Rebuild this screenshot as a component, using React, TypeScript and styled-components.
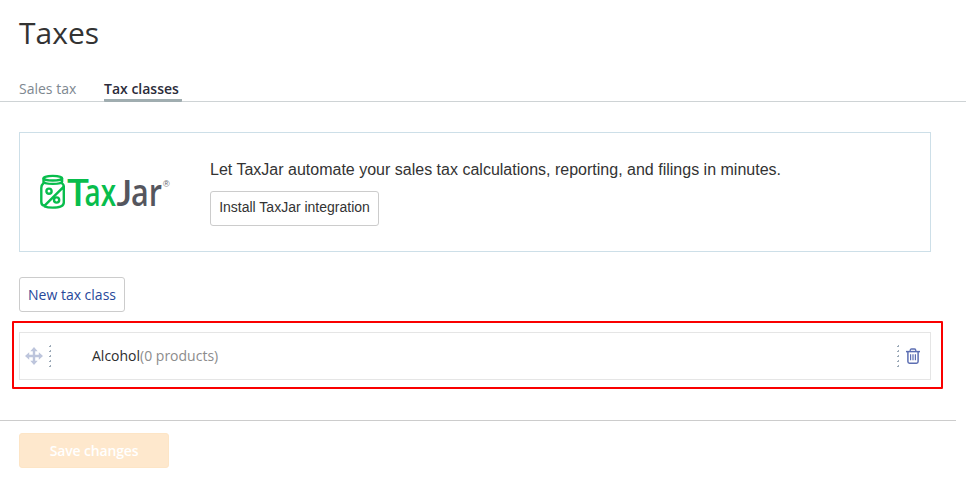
import React from "react";
import styled, { createGlobalStyle } from "styled-components";

const GlobalStyle = createGlobalStyle`
  *, *::before, *::after { box-sizing: border-box; }
  body {
    margin: 0;
    background: #fff;
    color: #313440;
    font-family: "Open Sans", sans-serif;
    font-size: 14px;
  }
  button { font: inherit; cursor: pointer; }
`;

const Page = styled.main`
  display: flex;
  flex-direction: column;
  height: 484px;
  overflow: hidden;
`;

const Title = styled.h1`
  margin: 13px 0 0 19px;
  font-size: 30px;
  line-height: 40px;
  font-weight: 400;
  color: #333;
`;

const Tabs = styled.nav`
  display: flex;
  gap: 27px;
  height: 49px;
  padding-left: 19px;
  align-items: flex-end;
  border-bottom: 1px solid #ced3d5;
`;

const Tab = styled.a<{ $active?: boolean; $width: number }>`
  width: ${(p) => p.$width}px;
  height: 23px;
  margin-bottom: -1px;
  line-height: 20px;
  white-space: nowrap;
  font-size: 14px;
  font-weight: ${(p) => (p.$active ? 600 : 400)};
  color: ${(p) => (p.$active ? "#2c2c3a" : "#7e8890")};
  border-bottom: 3px solid ${(p) => (p.$active ? "#a0adb0" : "transparent")};
  border-radius: 1px;
`;

const Promo = styled.section`
  display: flex;
  height: 120px;
  margin: 30px 35px 0 19px;
  border: 1px solid #cddfe8;
`;

const LogoSlot = styled.div`
  width: 190px;
  flex: none;
  padding: 34px 0 0 14px;
  svg { display: block; }
`;

const PromoBody = styled.div`
  display: flex;
  flex-direction: column;
  align-items: flex-start;
  padding-top: 27px;
  font-family: "Liberation Sans", Arial, sans-serif;
`;

const PromoText = styled.p`
  margin: 0 0 11px;
  font-size: 16px;
  line-height: 20px;
  letter-spacing: 0.004px;
  color: #333;
`;

const Button = styled.button<{ $width: number; $color: string }>`
  width: ${(p) => p.$width}px;
  height: 35px;
  padding: 0;
  white-space: nowrap;
  background: #fff;
  border: 1px solid #ccc;
  border-radius: 3px;
  color: ${(p) => p.$color};
`;

const InstallButton = styled(Button)`
  padding-bottom: 3px;
`;

const Actions = styled.div`
  margin: 25px 0 0 19px;
  display: flex;
`;

const Highlight = styled.div`
  width: 931px;
  height: 68px;
  margin: 9px 0 0 12px;
  padding: 9px 10px 7px 5px;
  border: 2px solid #fa0000;
  border-radius: 1px;
`;

const ClassRow = styled.div`
  display: flex;
  align-items: center;
  height: 48px;
  padding: 0 10px 0 5px;
  border: 1px solid #e5e5e5;
`;

const Dots = styled.svg`
  margin-left: 6px;
  flex: none;
`;

const ClassName = styled.span`
  flex: 1;
  margin-left: 41px;
  line-height: 20px;
  color: #2d2d2d;
`;

const Count = styled.span`
  color: #8c8c8c;
`;

const Trash = styled.svg`
  margin: -1px 0 0 7px;
  flex: none;
`;

const Footer = styled.footer`
  width: 956px;
  margin-top: 31px;
  padding: 12px 0 0 19px;
  border-top: 1px solid #ccc;
`;

const SaveButton = styled.button`
  width: 150px;
  height: 35px;
  padding: 0;
  border: 1px solid #fde5c6;
  border-radius: 3px;
  background: #fee8cd;
  color: #fff;
  font-weight: 600;
  letter-spacing: -0.15px;
`;

function TaxJarLogo() {
  return (
    <svg width="150" height="60" viewBox="0 -4 150 60" role="img" aria-label="TaxJar">
      <g fill="none" stroke="#08bd4c" strokeWidth="2.4" strokeLinecap="round" strokeLinejoin="round">
        <ellipse cx="18.8" cy="7.2" rx="9.3" ry="2.3" />
        <path d="M9.5 7.6v3.2c0 1.2 4.1 2.1 9.3 2.1s9.3-.9 9.3-2.1V7.6" />
        <path d="M9.6 12C7.8 13.6 7.3 14.8 7.3 17v14c0 2.2 1 3.6 3.3 3.6L29.8 15.6v15.8c0 3.6-5 5.2-11.4 5.2-3.4 0-6-.5-7.9-1.3" />
        <circle cx="15" cy="20.2" r="2.6" />
        <circle cx="22.6" cy="29" r="2.6" />
        <path d="M28 12.2c1.2.9 1.8 2 1.8 3.4" />
      </g>
      <g fontFamily="Open Sans, sans-serif" fontSize="37" fontWeight="600">
        <text x="33" y="35" textLength="22" lengthAdjust="spacingAndGlyphs" fill="#08bd4c">T</text>
        <text x="50.5" y="35" textLength="31.5" lengthAdjust="spacingAndGlyphs" fill="#08bd4c">ax</text>
        <text x="82.5" y="35" fontFamily="Lato, sans-serif" fill="#55565e">J</text>
        <text x="97" y="35" textLength="31" lengthAdjust="spacingAndGlyphs" fill="#55565e">ar</text>
      </g>
      <text x="129" y="16.4" fontFamily="Liberation Sans, sans-serif" fontSize="9" fill="#66666d">®</text>
    </svg>
  );
}

function MoveIcon() {
  return (
    <svg width="18" height="18" viewBox="0 0 18 18" aria-hidden="true">
      <path d="M9 2v14M2 9h14" stroke="#bdc5dc" strokeWidth="2.4" />
      <path d="M9 0l3.7 4.2H5.3zM9 18l3.7-4.2H5.3zM0 9l4.2-3.7v7.4zM18 9l-4.2-3.7v7.4z" fill="#bdc5dc" />
    </svg>
  );
}

function DottedDivider() {
  return (
    <Dots width="2" height="22" viewBox="0 0 2 22" aria-hidden="true">
      {[0, 5, 10, 15, 20].map((y) => (
        <g key={y} fill="#9caab8">
          <rect x="1" y={y} width="1" height="2" />
          <rect y={y + 1} width="1" height="1" />
        </g>
      ))}
    </Dots>
  );
}

function TrashIcon() {
  return (
    <Trash width="14" height="16" viewBox="0 0 14 16" fill="none" stroke="#5c6eb2" aria-label="Delete">
      <path d="M4.2 3.5V2.4Q4.2 1 5.5 1h3q1.3 0 1.3 1.4v1.1" strokeWidth="1.3" />
      <path d="M0 3.6h14" strokeWidth="1.5" />
      <path d="M1.9 4v9.5q0 1.7 1.6 1.7h7q1.6 0 1.6-1.7V4" strokeWidth="1.5" />
      <path d="M4.6 6.3v6M7 6.3v6M9.4 6.3v6" strokeWidth="1.2" />
    </Trash>
  );
}

export default function App() {
  return (
    <>
      <GlobalStyle />
      <Page>
        <Title>Taxes</Title>
        <Tabs>
          <Tab $width={58}>Sales tax</Tab>
          <Tab $active $width={78}>Tax classes</Tab>
        </Tabs>
        <Promo>
          <LogoSlot><TaxJarLogo /></LogoSlot>
          <PromoBody>
            <PromoText>Let TaxJar automate your sales tax calculations, reporting, and filings in minutes.</PromoText>
            <InstallButton $width={169} $color="#333">Install TaxJar integration</InstallButton>
          </PromoBody>
        </Promo>
        <Actions>
          <Button $width={106} $color="#27489a">New tax class</Button>
        </Actions>
        <Highlight>
          <ClassRow>
            <MoveIcon />
            <DottedDivider />
            <ClassName>Alcohol<Count>(0 products)</Count></ClassName>
            <DottedDivider />
            <TrashIcon />
          </ClassRow>
        </Highlight>
        <Footer>
          <SaveButton>Save changes</SaveButton>
        </Footer>
      </Page>
    </>
  );
}
